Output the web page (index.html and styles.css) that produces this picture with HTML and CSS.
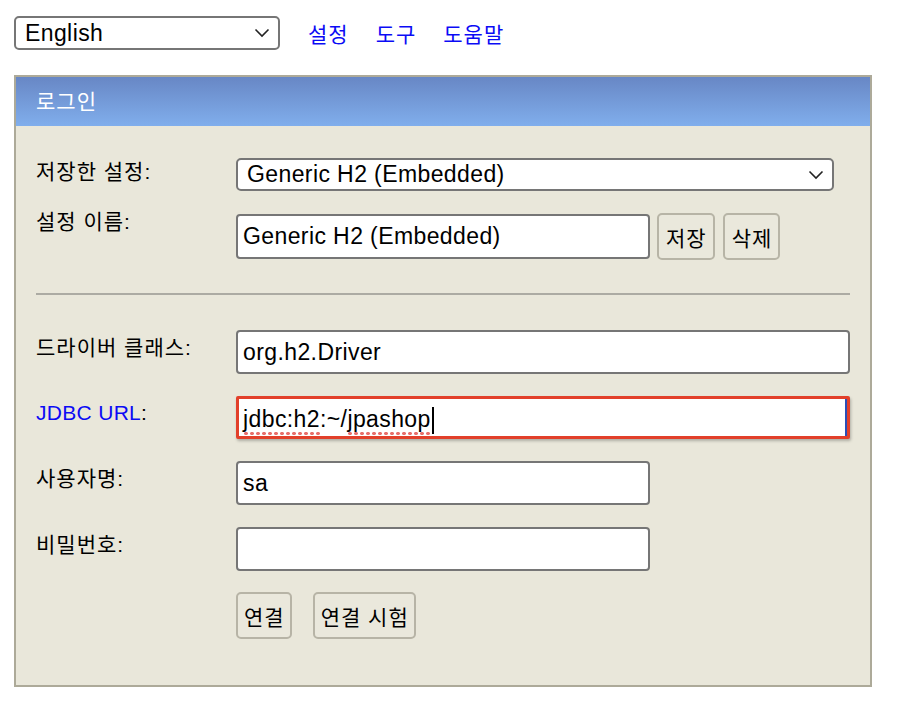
FILE: index.html
```html
<!DOCTYPE html>
<html lang="ko">
<head>
<meta charset="utf-8">
<title>H2 Console</title>
<link rel="stylesheet" href="styles.css">
</head>
<body>
<div class="topbar">
  <div class="select lang-select">
    <span class="select-text">English</span>
    <svg class="chev" width="16" height="10" viewBox="0 0 16 10"><path d="M1.5 1.5 L8 8 L14.5 1.5" fill="none" stroke="#222" stroke-width="1.6"/></svg>
  </div>
  <nav class="links">
    <a href="#">설정</a>
    <a href="#">도구</a>
    <a href="#">도움말</a>
  </nav>
</div>

<div class="panel">
  <div class="panel-head">로그인</div>
  <div class="panel-body">
    <div class="row">
      <div class="label label-first">저장한 설정:</div>
      <div class="select settings-select">
        <span class="select-text">Generic H2 (Embedded)</span>
        <svg class="chev" width="16" height="10" viewBox="0 0 16 10"><path d="M1.5 1.5 L8 8 L14.5 1.5" fill="none" stroke="#222" stroke-width="1.6"/></svg>
      </div>
    </div>
    <div class="row row-name">
      <div class="label label-top">설정 이름:</div>
      <div class="field-group">
        <div class="input narrow">Generic H2 (Embedded)</div>
        <button class="btn">저장</button>
        <button class="btn">삭제</button>
      </div>
    </div>

    <div class="divider"></div>

    <div class="row">
      <div class="label">드라이버 클래스:</div>
      <div class="input wide">org.h2.Driver</div>
    </div>
    <div class="row">
      <div class="label"><span class="blue">JDBC URL</span>:</div>
      <div class="input wide focused"><span class="spell">jdbc:h2</span>:~/<span class="spell">jpashop</span><span class="caret"></span></div>
    </div>
    <div class="row">
      <div class="label">사용자명:</div>
      <div class="input narrow">sa</div>
    </div>
    <div class="row">
      <div class="label">비밀번호:</div>
      <div class="input narrow"></div>
    </div>
    <div class="row">
      <div class="label"></div>
      <div class="actions">
        <button class="btn">연결</button>
        <button class="btn">연결 시험</button>
      </div>
    </div>
  </div>
</div>
</body>
</html>
```
FILE: styles.css
```css
* { box-sizing: border-box; }

body {
  margin: 0;
  background: #ffffff;
  font-family: "Liberation Sans", "Noto Sans CJK KR", sans-serif;
  color: #000;
}

.topbar {
  display: flex;
  align-items: center;
  padding: 16px 0 0 14px;
  height: 50px;
}

.select {
  display: flex;
  align-items: center;
  justify-content: space-between;
  background: #fff;
  border: 2px solid #767676;
  border-radius: 5px;
  font-size: 23px;
  letter-spacing: 0.4px;
  padding: 0 8px 0 9px;
}

.lang-select {
  width: 266px;
  height: 34px;
}

.select-text { line-height: 1; }

.chev { flex: none; }

.links {
  display: flex;
  gap: 27px;
  margin-left: 28px;
  font-size: 21px;
  letter-spacing: 1px;
}

.links a {
  text-decoration: none;
  color: #0b0bf5;
}

.panel {
  margin: 25px 0 0 14px;
  width: 858px;
  height: 612px;
  border: 2px solid #adaa99;
  background: #e9e7da;
}

.panel-head {
  height: 49px;
  background: linear-gradient(#6887c5, #80aeec);
  color: #fff;
  font-size: 21px;
  letter-spacing: 1px;
  line-height: 49px;
  padding-left: 20px;
}

.panel-body {
  padding: 32px 20px 0 20px;
  display: flex;
  flex-direction: column;
}

.row {
  display: grid;
  grid-template-columns: 200px 1fr;
  align-items: center;
  margin-bottom: 22px;
}

.row-name { margin-bottom: 0; }

.label {
  font-size: 21px;
  letter-spacing: 1px;
  line-height: 30px;
  margin-top: -9px;
  white-space: nowrap;
}

.label-first { margin-top: -6px; }

.label-top {
  align-self: start;
  margin-top: -6px;
}

.blue { color: #0b0bf5; letter-spacing: 0.3px; }

.settings-select {
  width: 598px;
  height: 33px;
  padding-left: 9px;
}

.field-group {
  display: flex;
  align-items: center;
  gap: 7px;
}

.input {
  height: 44px;
  background: #fff;
  border: 2px solid #767676;
  border-radius: 4px;
  font-size: 23px;
  letter-spacing: 0.4px;
  line-height: 40px;
  padding-left: 5px;
  white-space: nowrap;
}

.field-group .input { height: 45px; line-height: 41px; }

.narrow { width: 414px; }
.wide { width: 614px; }

.focused {
  border: 3px solid #e2402a;
  border-radius: 2px;
  box-shadow: 1px 2px 3px rgba(0,0,0,0.25), inset -2px 0 0 #2a4fb8;
  line-height: 40px;
  padding-left: 4px;
  height: 43px;
}

.spell {
  padding-bottom: 4px;
  background-image: radial-gradient(circle, #e8706c 1.6px, transparent 2px);
  background-size: 6px 5px;
  background-repeat: repeat-x;
  background-position: 0 100%;
}

.caret {
  display: inline-block;
  width: 2px;
  height: 27px;
  background: #000;
  vertical-align: middle;
  margin-left: 1px;
}

.btn {
  font-family: "Liberation Sans", "Noto Sans CJK KR", sans-serif;
  font-size: 21px;
  letter-spacing: 1px;
  color: #000;
  background: #eae8dc;
  border: 2px solid #b7b4a6;
  border-radius: 5px;
  height: 47px;
  padding: 0 6px 0 7px;
}

.field-group .btn + .btn { margin-left: 1px; }

.actions {
  display: flex;
  gap: 21px;
  margin-top: -1px;
}

.actions .btn { padding: 0 5px 0 6px; }

.divider {
  height: 2px;
  background: #acaba3;
  margin: 33px 0 35px 0;
}
```
